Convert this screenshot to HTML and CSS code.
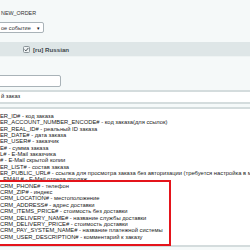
FILE: index.html
```html
<!DOCTYPE html>
<html lang="ru">
<head>
    <meta charset="UTF-8">
    <title>Почтовый шаблон</title>
    <link rel="stylesheet" href="styles.css">
</head>
<body>
    <div class="page">
        <div class="event-block">
            <div class="event-code">NEW_ORDER</div>
            <div class="select-box">
                <span class="select-text">ое событие</span>
                <span class="select-arrow">&#9662;</span>
            </div>
        </div>

        <div class="lang-bar">
            <svg class="check" width="7" height="7" viewBox="0 0 7 7">
                <rect x="0.5" y="0.5" width="6" height="6" rx="1" fill="#eef2f3" stroke="#8a9499"/>
                <path d="M1.6 3.6 L2.9 4.9 L5.4 1.9" fill="none" stroke="#4a5257" stroke-width="1"/>
            </svg>
            <span class="lang-name">[ru] Russian</span>
        </div>

        <div class="field-row">
            <div class="text-input"></div>
        </div>

        <div class="subject-input">й заказ</div>

        <div class="body-area">
            <div class="line">ER_ID# - код заказа</div>
            <div class="line">ER_ACCOUNT_NUMBER_ENCODE# - код заказа(для ссылок)</div>
            <div class="line">ER_REAL_ID# - реальный ID заказа</div>
            <div class="line">ER_DATE# - дата заказа</div>
            <div class="line">ER_USER# - заказчик</div>
            <div class="line">E# - сумма заказа</div>
            <div class="line">L# - E-Mail заказчика</div>
            <div class="line"># - E-Mail скрытой копии</div>
            <div class="line">ER_LIST# - состав заказа</div>
            <div class="line">ER_PUBLIC_URL# - ссылка для просмотра заказа без авторизации (требуется настройка в модуле)</div>
            <div class="line">_EMAIL# - E-Mail отдела продаж</div>
            <div class="line">CRM_PHONE# - телефон</div>
            <div class="line">CRM_ZIP# - индекс</div>
            <div class="line">CRM_LOCATION# - местоположение</div>
            <div class="line">CRM_ADDRESS# - адрес доставки</div>
            <div class="line">CRM_ITEMS_PRICE# - стоимость без доставки</div>
            <div class="line">CRM_DELIVERY_NAME# - название службы доставки</div>
            <div class="line">CRM_DELIVERY_PRICE# - стоимость доставки</div>
            <div class="line">CRM_PAY_SYSTEM_NAME# - название платежной системы</div>
            <div class="line">CRM_USER_DESCRIPTION# - комментарий к заказу</div>

            <div class="highlight"></div>
        </div>
    </div>
</body>
</html>
```

FILE: styles.css
```css
* {
    margin: 0;
    padding: 0;
    box-sizing: border-box;
    font-family: 'Liberation Sans', Arial, sans-serif;
}

body {
    background: #f5f9f9;
    width: 250px;
    height: 250px;
    overflow: hidden;
}

.page {
    position: relative;
    width: 250px;
}

.event-block {
    height: 42px;
    padding-top: 10px;
}

.event-code {
    font-size: 5.4px;
    line-height: 6px;
    color: #333;
    padding-left: 1px;
}

.select-box {
    display: flex;
    align-items: center;
    justify-content: space-between;
    margin-top: 6px;
    margin-left: -2px;
    width: 46px;
    height: 11px;
    background: #fff;
    border: 1px solid #a9b3b8;
    border-radius: 2px;
    padding: 0 3px 0 2px;
}

.select-text {
    font-size: 5.6px;
    color: #333;
}

.select-arrow {
    font-size: 5px;
    color: #111;
}

.lang-bar {
    display: flex;
    align-items: center;
    gap: 3px;
    height: 15px;
    padding-left: 23px;
    background: #dee6e7;
    border-bottom: 1px solid #eef3f3;
}

.check {
    display: block;
}

.lang-name {
    font-size: 6.2px;
    font-weight: bold;
    color: #3d474d;
}

.field-row {
    height: 35px;
    padding-top: 18px;
    border-bottom: 2px solid #d4dcdd;
}

.text-input {
    margin-left: -2px;
    width: 63px;
    height: 12px;
    background: #fff;
    border: 1px solid #a9b3b8;
    border-radius: 2px;
}

.subject-input {
    height: 12px;
    background: #fff;
    border-bottom: 2px solid #d4dcdd;
    font-size: 5.8px;
    line-height: 9px;
    color: #222;
    padding-left: 1px;
}

.body-area {
    position: relative;
    margin-top: 3px;
    background: #fff;
    border-top: 2px solid #d4dcdd;
    border-bottom: 2px solid #d4dcdd;
    padding: 4px 0 6px 0;
    height: 140px;
}

.line {
    font-size: 5.8px;
    line-height: 6.35px;
    color: #222;
    white-space: nowrap;
    overflow: hidden;
}

.highlight {
    position: absolute;
    left: -3px;
    top: 71px;
    width: 174px;
    height: 66px;
    border: 2px solid #e4141b;
}
```
